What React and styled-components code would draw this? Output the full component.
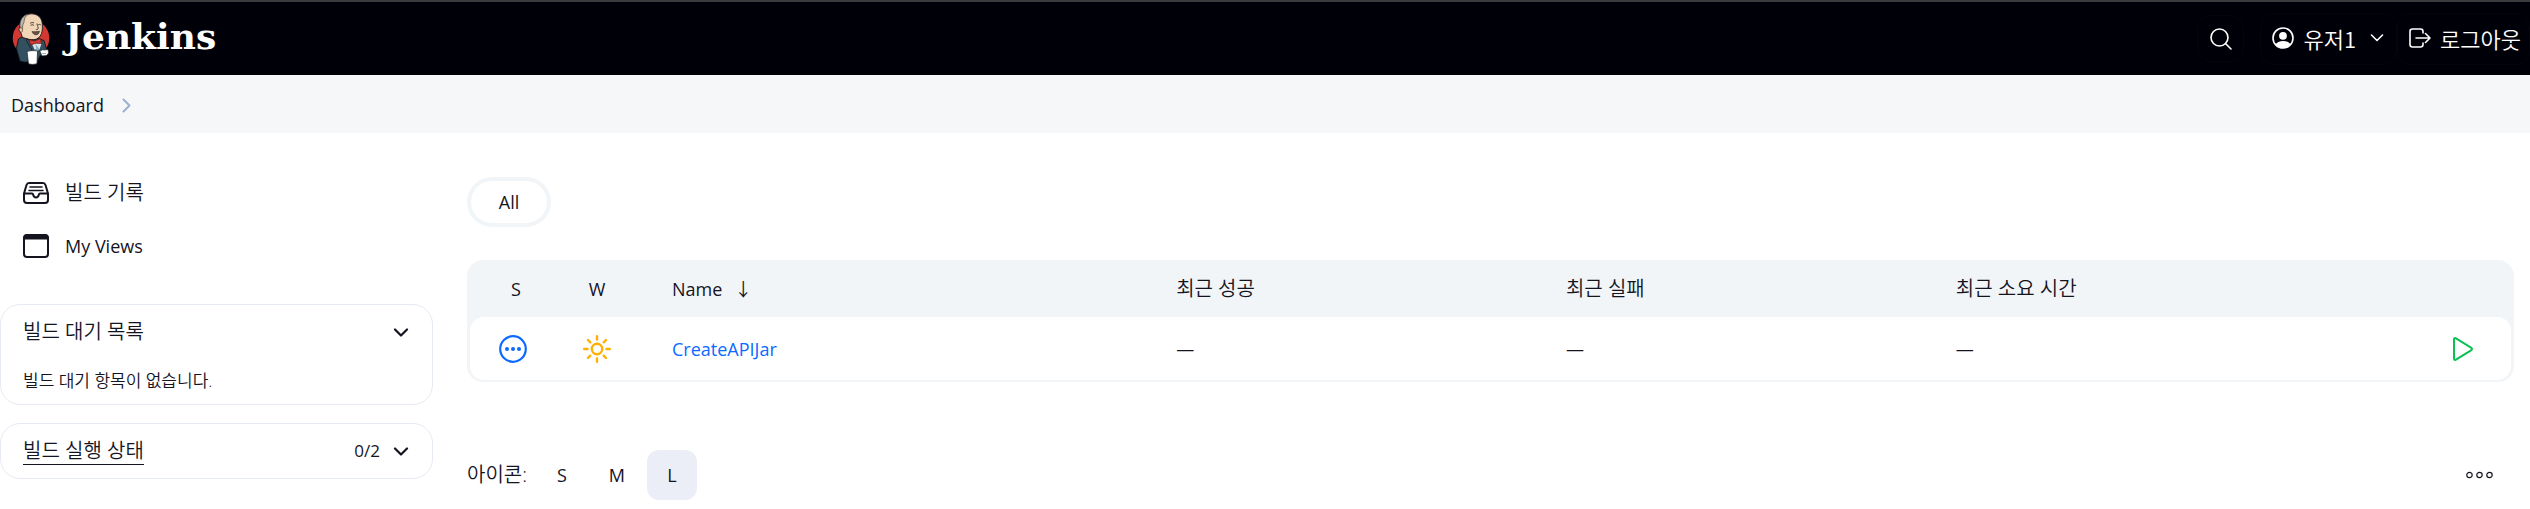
import React from "react";
import styled, { createGlobalStyle } from "styled-components";

const GlobalStyle = createGlobalStyle`
  * { box-sizing: border-box; }
  body {
    margin: 0;
    background: #fff;
    color: #14141f;
    font-family: "Open Sans", "Noto Sans CJK KR", sans-serif;
    font-size: 18px;
    font-weight: 400;
    line-height: 24px;
  }
  button { font: inherit; color: inherit; background: none; border: 0; padding: 0; cursor: pointer; }
  a { color: inherit; text-decoration: none; }
  svg { display: block; flex: none; }
  h2, p, ul, ol { margin: 0; padding: 0; font-weight: inherit; font-size: inherit; }
  ul, ol { list-style: none; }
`;

const Header = styled.header`
  display: flex;
  align-items: center;
  justify-content: space-between;
  height: 75px;
  padding-left: 12px;
  border-top: 2px solid #3c3c3f;
  background: #000008;
  color: #fff;
`;

const Brand = styled.a`
  display: flex;
  align-items: center;
  gap: 15px;
`;

const BrandName = styled.span`
  font-family: "DejaVu Serif", serif;
  font-weight: 700;
  font-size: 36px;
  line-height: 44px;
  padding-bottom: 6px;
`;

const HeaderActions = styled.div`
  display: flex;
  align-items: center;
`;

const SearchButton = styled.button`
  display: grid;
  place-items: center;
  width: 47px;
  height: 47px;
  margin-right: 16px;
  border: 1px solid #05050d;
  border-radius: 14px;
`;

const HeaderLink = styled.a`
  display: flex;
  align-items: center;
  gap: 9px;
  height: 52px;
  padding: 0 ${(p) => p.$end || 8}px 2px 11px;
  border: 1px solid #05050d;
  border-radius: 14px;
  font-family: "Noto Sans CJK KR", sans-serif;
  font-weight: 350;
  font-size: 22px;
  line-height: 32px;
  white-space: nowrap;
`;

const MenuChevron = styled.span`
  padding-left: 5px;
`;

const Breadcrumbs = styled.nav`
  display: flex;
  align-items: center;
  height: 58px;
  padding: 2px 11px 0;
  background: #f6f7f9;

  ol { display: flex; align-items: center; gap: 18px; }
`;

const Page = styled.div`
  display: flex;
  align-items: flex-start;
`;

const Sidebar = styled.aside`
  flex: none;
  width: 433px;
  padding-top: 33px;
`;

const TaskList = styled.ul`
  padding-bottom: 32px;
`;

const Task = styled.a`
  display: flex;
  align-items: center;
  gap: 16px;
  height: 53px;
  padding-left: 23px;
  font-size: ${(p) => (p.$korean ? 20 : 18)}px;
  font-weight: ${(p) => (p.$korean ? 350 : 400)};
`;

const Card = styled.section`
  margin-bottom: 18px;
  padding: 0 22px;
  border: 1px solid #e6eaf2;
  border-radius: 20px;
`;

const CardHeader = styled.div`
  display: flex;
  align-items: center;
  justify-content: space-between;
  height: 54px;
`;

const CardTitle = styled.h2`
  font-size: 20px;
  font-weight: 350;
  line-height: 24px;

  a { border-bottom: 1px solid #14141f; }
`;

const CardTools = styled.div`
  display: flex;
  align-items: center;
  gap: 12px;
  font-size: 17px;
`;

const CollapseButton = styled.button`
  display: grid;
  place-items: center;
  width: 18px;
  height: 24px;
`;

const CardBody = styled.p`
  padding: 10px 0 11px;
  font-size: 17px;
  font-weight: 350;
`;

const Main = styled.main`
  flex: 1;
  min-width: 0;
  padding: 44px 16px 0 34px;
`;

const ViewTab = styled.a`
  display: flex;
  align-items: center;
  justify-content: center;
  width: 84px;
  height: 50px;
  border: 4px solid #f2f5f8;
  border-radius: 25px;
`;

const Projects = styled.table`
  width: 100%;
  margin-top: 33px;
  table-layout: fixed;
  border: solid #f2f5f8;
  border-width: 0 3px 2px;
  border-radius: 16px;
  border-spacing: 0;
  background: #f2f5f8;
`;

const Col = styled.col`
  width: ${(p) => p.$w};
`;

const HeadCell = styled.th`
  height: 57px;
  padding: 0 0 0 ${(p) => (p.$center ? 0 : 40)}px;
  text-align: ${(p) => (p.$center ? "center" : "left")};
  font-weight: ${(p) => (p.$korean ? 350 : 400)};
  font-size: ${(p) => (p.$korean ? 20 : 18)}px;
`;

const SortLink = styled.a`
  display: inline-flex;
  align-items: center;
  gap: 12px;
`;

const Cell = styled.td`
  height: 63px;
  padding: 0 0 0 ${(p) => (p.$center ? 0 : 40)}px;
  background: #fff;

  &:first-child { padding-right: 6px; border-radius: 14px 0 0 14px; }
  &:last-child { border-radius: 0 14px 14px 0; }
  svg { margin: 0 auto; }
`;

const ProjectLink = styled.a`
  color: #0b6aff;
`;

const BuildButton = styled.button`
  display: block;
  margin: 0 auto;
`;

const Footer = styled.div`
  display: flex;
  align-items: center;
  justify-content: space-between;
  padding: 68px 21px 6px 0;
`;

const SizePicker = styled.div`
  display: flex;
  align-items: center;
  gap: 5px;
`;

const SizeLabel = styled.span`
  padding-right: 5px;
  font-size: 20px;
  font-weight: 350;
`;

const SizeButton = styled.button`
  width: 50px;
  height: 50px;
  border-radius: 12px;
  background: ${(p) => (p.$active ? "#ebeef6" : "transparent")};
`;

const Icon = ({ w, h, stroke = "currentColor", sw = 2, children }) => (
  <svg
    width={w}
    height={h}
    viewBox={`0 0 ${w} ${h}`}
    fill="none"
    stroke={stroke}
    strokeWidth={sw}
    strokeLinecap="round"
    strokeLinejoin="round"
    aria-hidden="true"
  >
    {children}
  </svg>
);

const Butler = () => (
  <svg width="38" height="52" viewBox="0 0 38 52" aria-hidden="true">
    <ellipse cx="19" cy="25" rx="18.3" ry="18" fill="#d33833" />
    <path d="M6.5 26 10 24l9 4 7-2.500 6 2 2.500 9-2 4-4.500 2-3 6.500H12l-4-1-2-7-1.500-6z" fill="#335061" stroke="#151b20" strokeWidth="1" />
    <path d="M10.500 24.500 8.500 19C6.500 18 6.600 14.500 8 14 7.500 5.500 12.500.8 19.500.8c6.500 0 10.500 4.200 10.800 10.200.2 3 .2 6.500-.8 9.500-1 3.500-4.500 6-7.500 6.200-4 .2-7-1-11.500-2.200z" fill="#f0d6b7" stroke="#231f20" strokeWidth="1" />
    <path d="M8.300 14.500C7 8 10.500 2 17 1c-2 1.300-4 2.500-4.500 5-.5 2-.2 3.500-1.300 5-.7 1-.4 3-.7 4.500z" fill="#b9b9b5" stroke="#3b3532" strokeWidth=".6" />
    <path d="M8.200 15c1.500-.8 2.600.2 2.500 2s-.8 2.400-1.800 2.200" fill="#e6bd98" stroke="#3b3532" strokeWidth=".6" />
    <path d="M18.500 12.500c1-1 2.500-1 3.500 0M26 12c.8-.8 2-.8 2.800 0M25 10.500c.2 2.500 1.600 4 1 5.500-.5.800-1.500.7-2.200.5M18 10.500c1-1 2.500-1.200 4-.6" fill="none" stroke="#3b3028" strokeWidth=".9" />
    <path d="M20 18.500c2 .3 5 .2 7.500-.3-.5 2.500-2 3.800-3.800 3.600-1.700-.1-3-1.300-3.700-3.300z" fill="#6b5147" stroke="#332720" strokeWidth=".6" />
    <path d="m19.500 30 3 6.500h5l2-6-3-3z" fill="#dfe4e8" />
    <path d="m23.500 31 1 8 3-3z" fill="#81b0c4" />
    <path d="M17 26.500 22.500 28l6-2.500 1 5-5.500-.3-5.500 1.800z" fill="#d33833" stroke="#5e1514" strokeWidth=".7" />
    <path d="m14 27 7 12" stroke="#172a35" strokeWidth="1" />
    <path d="M15 38.500c3-1 7-1.200 10.500-.5l-.5 12.500c-2 1.200-7 1.200-8.500 0z" fill="#fff" stroke="#231f20" strokeWidth=".7" />
    <path d="M28 38.500c1.500-2 3-2 4-1.500l4-.5.700 3.500-2.200 2.500-4.500.5z" fill="#fff" stroke="#231f20" strokeWidth=".7" />
    <path d="M30 40.500h4" stroke="#777" strokeWidth=".6" />
  </svg>
);

const Chevron = () => (
  <Icon w={16} h={9} sw={2.200}>
    <path d="m2 1.500 6 6 6-6" />
  </Icon>
);

const emptyColumns = ["최근 성공", "최근 실패", "최근 소요 시간"];

export default function App() {
  return (
    <>
      <GlobalStyle />
      <Header>
        <Brand href="#">
          <Butler />
          <BrandName>Jenkins</BrandName>
        </Brand>
        <HeaderActions>
          <SearchButton aria-label="Search">
            <Icon w={22} h={22} sw={1.600}>
              <circle cx="9.500" cy="9.500" r="8.500" />
              <path d="m15.500 15.500 5.500 5.500" />
            </Icon>
          </SearchButton>
          <HeaderLink href="#" $end={12}>
            <Icon w={22} h={22} sw={1.600}>
              <circle cx="11" cy="11" r="10" />
              <circle cx="11" cy="8.800" r="3.900" fill="currentColor" stroke="none" />
              <path d="M3.500 17.500c1.300-2.300 4-3.500 7.500-3.500s6.200 1.200 7.500 3.500A10 10 0 0 1 11 21a10 10 0 0 1-7.500-3.500z" fill="currentColor" stroke="none" />
            </Icon>
            유저1
            <MenuChevron>
              <Icon w={14} h={8} sw={1.600}>
                <path d="m1.500 1 5.500 5.500L12.500 1" />
              </Icon>
            </MenuChevron>
          </HeaderLink>
          <HeaderLink href="#">
            <Icon w={22} h={20} sw={1.600}>
              <path d="M14 5V3.500C14 2 13 1 11.500 1h-8C2 1 1 2 1 3.500v13C1 18 2 19 3.500 19h8c1.500 0 2.500-1 2.500-2.500V15M7 10h14M16.500 5.500 21 10l-4.500 4.500" />
            </Icon>
            로그아웃
          </HeaderLink>
        </HeaderActions>
      </Header>
      <Breadcrumbs aria-label="Breadcrumb">
        <ol>
          <li><a href="#">Dashboard</a></li>
          <li>
            <Icon w={9} h={15} stroke="#9db0d3" sw={2}>
              <path d="m1.500 1.500 6 6-6 6" />
            </Icon>
          </li>
        </ol>
      </Breadcrumbs>
      <Page>
        <Sidebar>
          <TaskList>
            <li>
              <Task href="#" $korean>
                <Icon w={26} h={22} sw={2}>
                  <path d="M1 11.500 3.500 3C4 1.600 4.800 1 6 1h14c1.200 0 2 .6 2.500 2L25 11.500V18c0 2-1 3-3 3H4c-2 0-3-1-3-3zh8c.8 0 1 .4 1.200 1.300C10.600 14.700 11.500 15.500 13 15.500s2.400-.8 2.800-2.700c.2-.9.400-1.300 1.200-1.300h8" />
                  <path d="M7 5h12M6 8.500h14" strokeWidth="1.600" />
                </Icon>
                빌드 기록
              </Task>
            </li>
            <li>
              <Task href="#">
                <Icon w={26} h={24} sw={2}>
                  <rect x="1" y="1" width="24" height="22" rx="3" />
                  <path d="M1.500 4.500V3L3 1.500h20L24.500 3v1.500z" fill="currentColor" />
                </Icon>
                My Views
              </Task>
            </li>
          </TaskList>
          <Card>
            <CardHeader>
              <CardTitle>빌드 대기 목록</CardTitle>
              <CollapseButton aria-label="빌드 대기 목록"><Chevron /></CollapseButton>
            </CardHeader>
            <CardBody>빌드 대기 항목이 없습니다.</CardBody>
          </Card>
          <Card>
            <CardHeader>
              <CardTitle><a href="#">빌드 실행 상태</a></CardTitle>
              <CardTools>
                <span>0/2</span>
                <CollapseButton aria-label="빌드 실행 상태"><Chevron /></CollapseButton>
              </CardTools>
            </CardHeader>
          </Card>
        </Sidebar>
        <Main>
          <ViewTab href="#">All</ViewTab>
          <Projects>
            <colgroup>
              <Col $w="92px" />
              <Col $w="70px" />
              <Col $w="24.7%" />
              <Col $w="19.1%" />
              <Col $w="19.1%" />
              <Col />
              <Col $w="96px" />
            </colgroup>
            <thead>
              <tr>
                <HeadCell $center>S</HeadCell>
                <HeadCell $center>W</HeadCell>
                <HeadCell><SortLink href="#">Name <span>↓</span></SortLink></HeadCell>
                {emptyColumns.map((name) => <HeadCell key={name} $korean>{name}</HeadCell>)}
                <HeadCell />
              </tr>
            </thead>
            <tbody>
              <tr>
                <Cell $center>
                  <Icon w={28} h={28} stroke="#0b6aff" sw={2.200}>
                    <circle cx="14" cy="14" r="12.800" />
                    <g fill="#0b6aff" stroke="none">
                      <circle cx="8" cy="14" r="2" />
                      <circle cx="14" cy="14" r="2" />
                      <circle cx="20" cy="14" r="2" />
                    </g>
                  </Icon>
                </Cell>
                <Cell $center>
                  <Icon w={28} h={28} stroke="#ffb000" sw={2.400}>
                    <circle cx="14" cy="14" r="5.200" />
                    <path d="M14 1.200v3.300M14 23.500v3.300M1.200 14h3.300M23.500 14h3.300M5 5l2.300 2.300M20.700 20.700 23 23M5 23l2.300-2.300M20.700 7.300 23 5" />
                  </Icon>
                </Cell>
                <Cell><ProjectLink href="#">CreateAPIJar</ProjectLink></Cell>
                {emptyColumns.map((name) => <Cell key={name}>—</Cell>)}
                <Cell $center>
                  <BuildButton aria-label="Build">
                    <Icon w={20} h={24} stroke="#0bc153" sw={2}>
                      <path d="M1 2.300C1 1.200 2 .8 3 1.400l15 9.200c1.300.8 1.300 2 0 2.800L3 22.600c-1 .6-2 .2-2-.9z" />
                    </Icon>
                  </BuildButton>
                </Cell>
              </tr>
            </tbody>
          </Projects>
          <Footer>
            <SizePicker>
              <SizeLabel>아이콘:</SizeLabel>
              <SizeButton>S</SizeButton>
              <SizeButton>M</SizeButton>
              <SizeButton $active>L</SizeButton>
            </SizePicker>
            <button aria-label="More">
              <Icon w={27} h={8} sw={1.200}>
                <circle cx="3.500" cy="4" r="2.700" />
                <circle cx="13.500" cy="4" r="2.700" />
                <circle cx="23.500" cy="4" r="2.700" />
              </Icon>
            </button>
          </Footer>
        </Main>
      </Page>
    </>
  );
}
